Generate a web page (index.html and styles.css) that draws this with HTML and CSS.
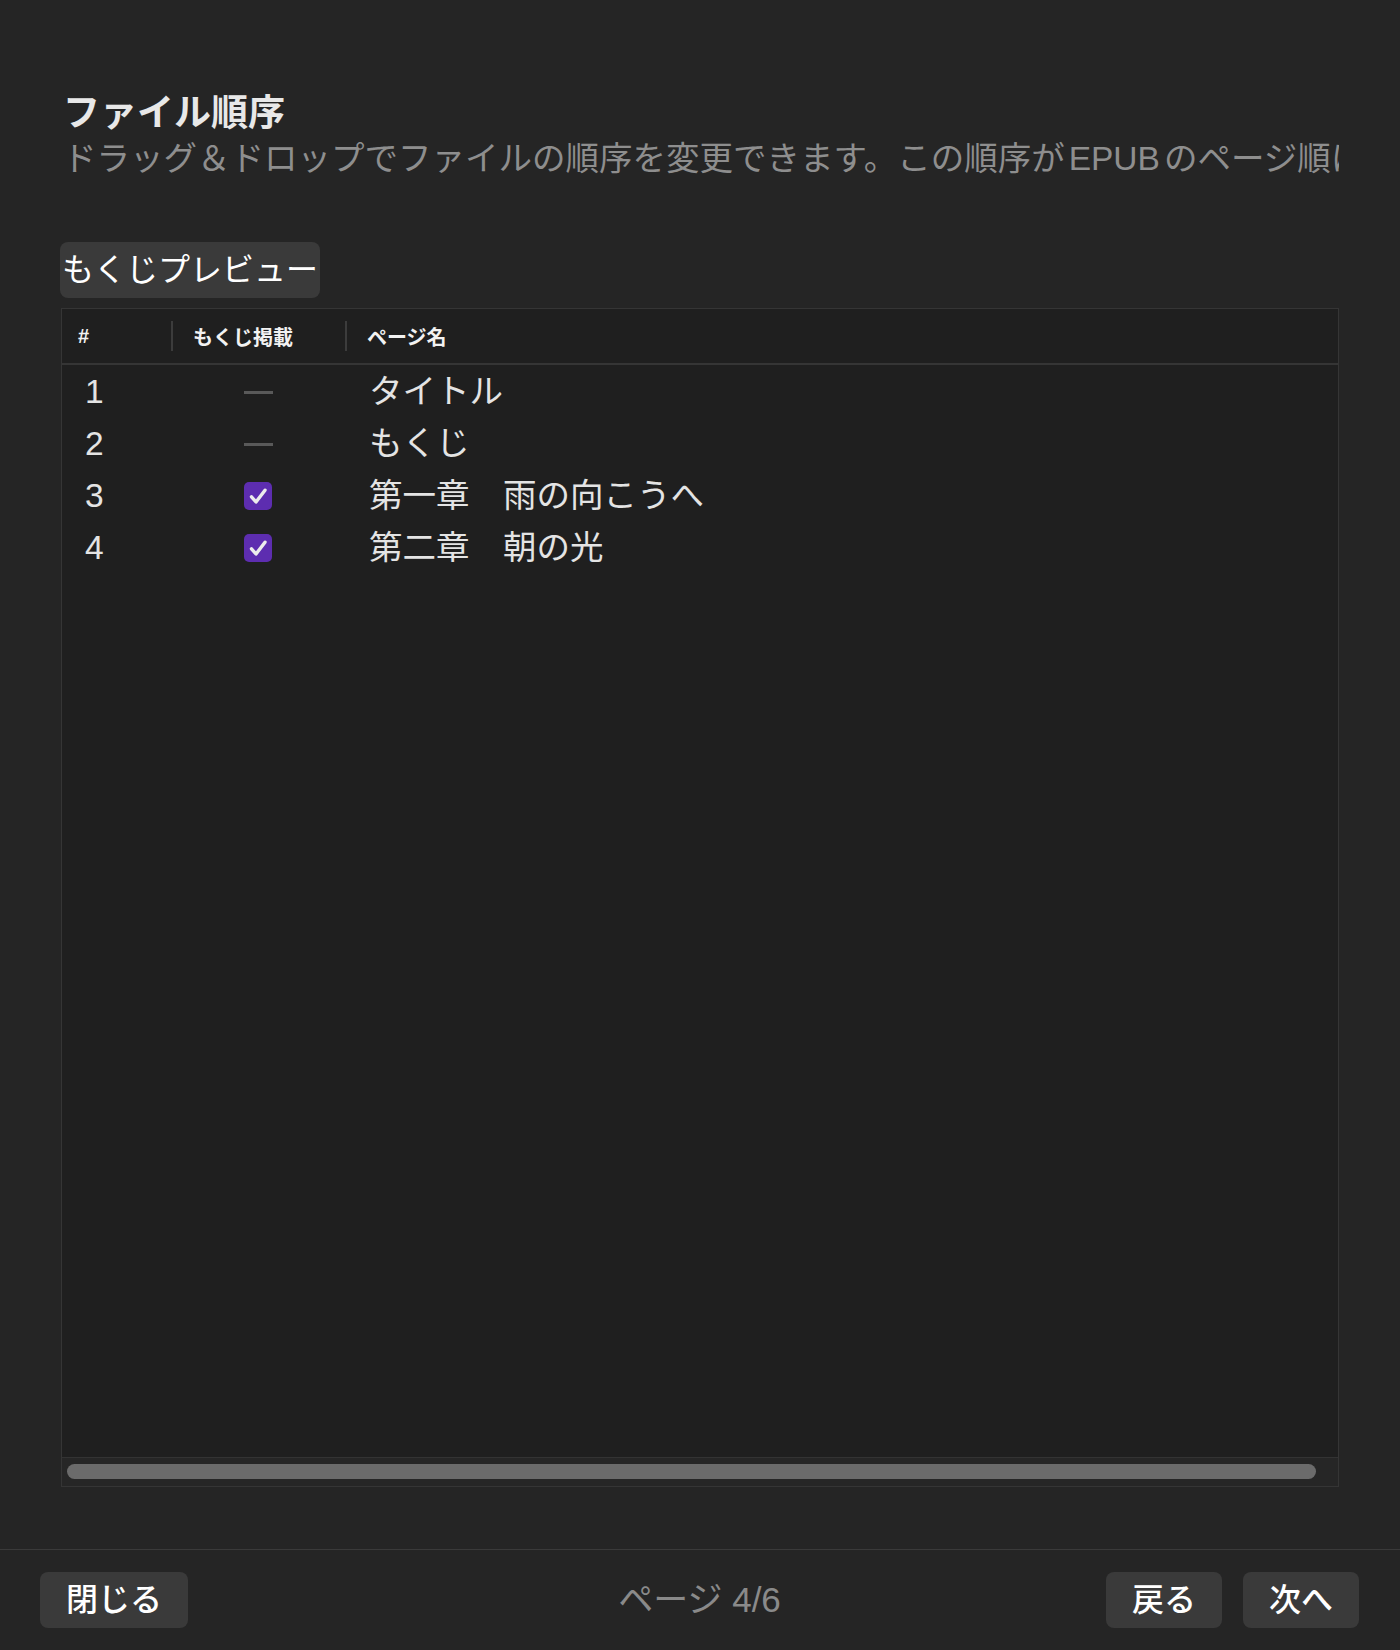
FILE: index.html
```html
<!DOCTYPE html>
<html lang="ja">
<head>
<meta charset="utf-8">
<title>ファイル順序</title>
<link rel="stylesheet" href="styles.css">
</head>
<body>
<div class="page">
  <main class="main">
    <h1 class="title">ファイル順序</h1>
    <p class="subtitle">ドラッグ＆ドロップでファイルの順序を変更できます。この順序が<span class="latin">EPUB</span>のページ順になります。</p>
    <div class="toolbar">
      <button class="preview-btn">もくじプレビュー</button>
    </div>
    <div class="table">
      <div class="thead">
        <div class="th th-num">#</div>
        <div class="th"><span class="sep"></span>もくじ掲載</div>
        <div class="th"><span class="sep"></span>ページ名</div>
      </div>
      <div class="tbody">
        <div class="tr">
          <div class="td td-num">1</div>
          <div class="td td-toc"><span class="dash"></span></div>
          <div class="td td-name">タイトル</div>
        </div>
        <div class="tr">
          <div class="td td-num">2</div>
          <div class="td td-toc"><span class="dash"></span></div>
          <div class="td td-name">もくじ</div>
        </div>
        <div class="tr">
          <div class="td td-num">3</div>
          <div class="td td-toc">
            <svg class="check" viewBox="0 0 28 28" width="28" height="28"><rect x="0" y="0" width="28" height="28" rx="5" fill="#5d2db0"/><path d="M7.5 14.8 L12 20 L21 8.2" fill="none" stroke="#ececec" stroke-width="3.4" stroke-linecap="round" stroke-linejoin="round"/></svg>
          </div>
          <div class="td td-name">第一章　雨の向こうへ</div>
        </div>
        <div class="tr">
          <div class="td td-num">4</div>
          <div class="td td-toc">
            <svg class="check" viewBox="0 0 28 28" width="28" height="28"><rect x="0" y="0" width="28" height="28" rx="5" fill="#5d2db0"/><path d="M7.5 14.8 L12 20 L21 8.2" fill="none" stroke="#ececec" stroke-width="3.4" stroke-linecap="round" stroke-linejoin="round"/></svg>
          </div>
          <div class="td td-name">第二章　朝の光</div>
        </div>
      </div>
      <div class="hscroll">
        <div class="thumb"></div>
      </div>
    </div>
  </main>
  <footer class="footer">
    <div class="footer-left">
      <button class="btn">閉じる</button>
    </div>
    <div class="page-indicator">ページ 4/6</div>
    <div class="footer-right">
      <button class="btn">戻る</button>
      <button class="btn">次へ</button>
    </div>
  </footer>
</div>
</body>
</html>
```

FILE: styles.css
```css
* {
  box-sizing: border-box;
}

html, body {
  margin: 0;
  padding: 0;
  background: #252525;
}

body {
  font-family: "Liberation Sans", "Noto Sans CJK JP", sans-serif;
  color: #e6e6e6;
}

.page {
  width: 1400px;
  height: 1650px;
  display: flex;
  flex-direction: column;
  overflow: hidden;
}

.main {
  flex: 1;
  min-height: 0;
  display: flex;
  flex-direction: column;
  padding: 92px 61px 62px 61px;
}

.title {
  margin: 0;
  font-size: 37px;
  line-height: 44px;
  font-weight: 700;
  color: #e8e8e8;
  padding-left: 2px;
}

.subtitle {
  margin: 3px 0 0 0;
  font-size: 33.5px;
  line-height: 40px;
  color: #8e8e8e;
  white-space: nowrap;
  overflow: hidden;
  padding-left: 2px;
}

.latin {
  margin: 0 4px;
}

.toolbar {
  display: flex;
  margin-top: 63px;
}

.preview-btn {
  font-family: inherit;
  font-size: 32px;
  line-height: 56px;
  height: 56px;
  padding: 0 2px;
  border: none;
  border-radius: 8px;
  background: #3a3a3a;
  color: #ffffff;
  margin-left: -1px;
}

.table {
  margin-top: 10px;
  flex: 1;
  min-height: 0;
  display: flex;
  flex-direction: column;
  border: 1px solid #353535;
  background: #1f1f1f;
}

.thead {
  display: grid;
  grid-template-columns: 109px 174px 1fr;
  height: 56px;
  border-bottom: 2px solid #353535;
}

.th {
  display: flex;
  align-items: center;
  gap: 20px;
  font-size: 20px;
  font-weight: 700;
  color: #f2f2f2;
}

.th-num {
  padding-left: 16px;
}

.sep {
  width: 2px;
  height: 30px;
  background: #3c3c3c;
}

.tbody {
  flex: 1;
  min-height: 0;
  padding-top: 1px;
}

.tr {
  display: grid;
  grid-template-columns: 109px 174px 1fr;
  height: 52px;
  align-items: center;
}

.td {
  font-size: 33.5px;
  line-height: 52px;
  color: #e4e4e4;
  white-space: nowrap;
}

.td-num {
  padding-left: 23px;
}

.td-toc {
  display: flex;
  justify-content: center;
  align-items: center;
  height: 52px;
}

.dash {
  display: block;
  width: 29px;
  height: 3px;
  background: #595959;
}

.check {
  display: block;
}

.td-name {
  padding-left: 24px;
}

.hscroll {
  height: 29px;
  border-top: 1px solid #333333;
  background: #262626;
  padding: 6px 22px 0 5px;
}

.thumb {
  height: 15px;
  border-radius: 8px;
  background: #6b6b6b;
}

.footer {
  height: 101px;
  border-top: 1px solid #3a3a3a;
  display: grid;
  grid-template-columns: 1fr auto 1fr;
  align-items: center;
  padding: 0 41px 0 40px;
}

.footer-left {
  display: flex;
  justify-content: flex-start;
}

.footer-right {
  display: flex;
  justify-content: flex-end;
  gap: 21px;
}

.btn {
  font-family: inherit;
  font-size: 32px;
  font-weight: 500;
  height: 56px;
  line-height: 56px;
  padding: 0 26px;
  border: none;
  border-radius: 8px;
  background: #3a3a3a;
  color: #ffffff;
}

.page-indicator {
  font-size: 35px;
  line-height: 40px;
  margin-top: -1px;
  color: #8a8a8a;
}
```
